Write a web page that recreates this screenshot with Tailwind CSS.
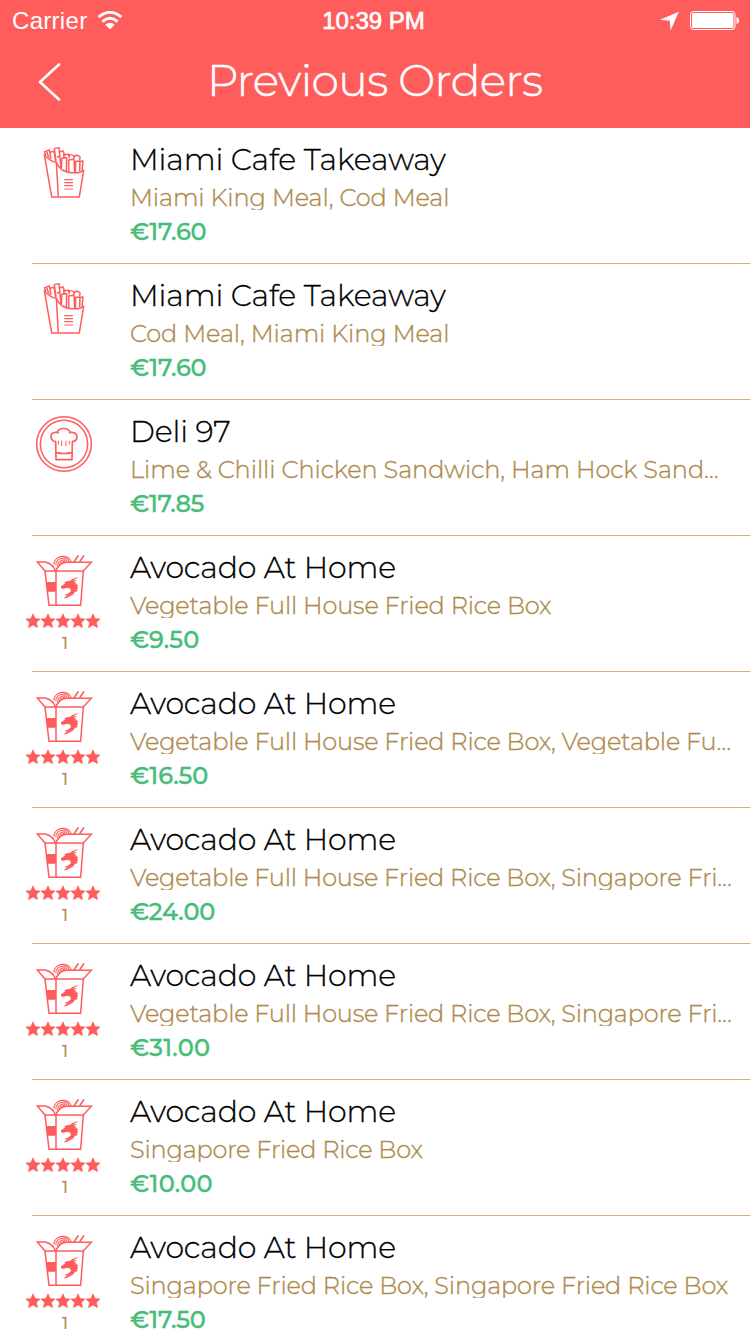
<!DOCTYPE html>
<html lang="en">
<head>
<meta charset="utf-8">
<title>Previous Orders</title>
<script src="https://cdn.jsdelivr.net/npm/@tailwindcss/browser@4"></script>
</head>
<body class="w-[750px] h-[1334px] overflow-hidden bg-white font-['Montserrat','Inter',sans-serif]">
<svg class="hidden">
  <symbol id="fries" viewBox="0 0 110 94">
    <g transform="translate(34 12.3) scale(.33333)" fill="none" stroke="#ff5c5c" stroke-width="4.5" stroke-linejoin="round">
      <path d="M31 43L53 170H136L149 90Q139 98 119 97Q80 99 67 66Q48 64 31 43Z"/>
      <path d="M67 66L73 170"/>
      <path d="M35 44L32 34L46 29L51 56M39 35L44 52M50 56L48 36L60 33L65 64M66 63L61 25L75 22L81 85M75 35L88 32L92 49M69 50L80 48M82 84L84 53L98 52L97 92M90 51L89 43L104 42L106 54M104 95L104 59L120 57L122 96M105 49L107 43L120 46L120 57M124 96L125 63L138 62L137 93M120 51L127 44L138 49L137 61M138 64L147 62L144 91"/>
      <path d="M91 118H117M91 127H117M91 136H117M91 146H117" stroke-width="3.5"/>
    </g>
  </symbol>
  <symbol id="chef" viewBox="0 0 110 94">
    <g transform="translate(30 10) scale(.33333)" fill="none" stroke="#ff5c5c" stroke-width="4.5" stroke-linejoin="round">
      <circle cx="102" cy="102" r="82"/><circle cx="102" cy="102" r="71"/>
      <path d="M78 147L77 95C59 92 58 68 76 67Q82 66 86 70M81 68C85 52 116 51 121 68M117 70Q121 66 127 67C146 69 145 92 127 95L126 149H78V147M78 128Q102 133 126 128" stroke-width="5"/>
      <path d="M85 92V104M95 92V108M108 92V108M118 92V104" stroke-width="3"/>
    </g>
  </symbol>
  <symbol id="noodles" viewBox="0 0 110 94">
    <g transform="translate(20 9) scale(.33333)" fill="none" stroke="#ff5c5c" stroke-width="4.5">
      <path d="M75 78H190L182 181H87ZM108 78V181"/>
      <path d="M75 78L52 51H76Q98 56 107 78Q118 54 140 52H214L190 78"/>
      <path d="M78 111H108V140H82Z" fill="#ff5c5c" stroke="none"/>
      <path d="M101 58C104 28 148 26 154 52M107 60C110 36 142 33 148 52M112 64C115 43 137 40 142 52M118 61C121 49 133 47 136 53" stroke-width="3.5"/>
      <path d="M162 51L175 31M179 51L192 31" stroke-width="5"/>
      <path d="M113 93L136 92" stroke-width="1" opacity=".4"/>
      <path fill="#ff5c5c" stroke="none" d="M123 123L130 119L137 114L130 113L141 109L149 108Q155 101 176 96Q168 103 158 106L171 106L163 110Q169 113 170 119L174 118L172 126L175 128L171 133L173 137L164 142L159 149L150 154L138 160L131 158L143 152L132 151L142 147L151 140Q155 134 148 130L139 128L132 131L124 131Z"/>
    </g>
  </symbol>
  <symbol id="stars" viewBox="0 0 76 16">
    <g fill="#ff5c5c" stroke="#ff5c5c" stroke-width=".5">
      <path id="s" d="M8 .8L10.2 5.4L15.2 6L11.5 9.6L12.6 14.7L8 12.1L3.4 14.7L4.5 9.6L.8 6L5.8 5.4Z"/>
      <use href="#s" x="15"/><use href="#s" x="30"/><use href="#s" x="45"/><use href="#s" x="60"/>
    </g>
  </symbol>
</svg>

<header class="h-[128px] bg-[#ff5c5c] text-white">
  <div class="h-[41px] grid grid-cols-[1fr_auto_1fr] items-center font-['Liberation_Sans',Arial,sans-serif] text-[24px] leading-[41px]">
    <div class="flex items-center pl-[12px]">
      <span class="tracking-[0.3px]">Carrier</span>
      <svg class="ml-[10px] w-[26px] h-[20px]" viewBox="98 11 26 20" fill="none" stroke="white" stroke-width="3">
        <path d="M99.6 17.2Q111 7.4 122.4 17.2M103.4 21.6Q111 15 118.6 21.6"/>
        <path d="M106.2 24.8Q111 20.6 115.8 24.8L111 29.2Z" fill="white" stroke="none"/>
      </svg>
    </div>
    <div class="-ml-[3px] [-webkit-text-stroke:0.7px_white]">10:39 PM</div>
    <svg class="justify-self-end w-[92px] h-[41px]" viewBox="658 0 92 41">
      <path d="M660 19.8L678.8 11.7L670.6 30.5L669.8 20.7Z" fill="white"/>
      <rect x="690.5" y="11.5" width="44.5" height="18" rx="3" fill="none" stroke="white"/>
      <rect x="692" y="13" width="41.5" height="15" rx="1.5" fill="white"/>
      <path d="M736.5 17Q739 17.5 739 20.5T736.5 24Z" fill="white"/>
    </svg>
  </div>
  <div class="h-[78px] flex items-center">
    <svg class="w-[208px] h-[78px]" viewBox="0 41 208 78" fill="none" stroke="white" stroke-width="2.6" stroke-linecap="round" stroke-linejoin="round"><path d="M59 64.5L40 82L59 99.5"/></svg>
    <h1 class="text-[44px] font-light tracking-[-0.6px] leading-[78px] whitespace-nowrap -ml-[1px] [-webkit-text-stroke:0.5px_white]">Previous Orders</h1>
  </div>
</header>
<main id="orders"></main>

<template id="row">
  <article class="relative h-[136px] flex whitespace-nowrap">
    <div class="w-[130px] shrink-0 flex flex-col">
      <svg class="w-[110px] h-[94px]"><use class="icon"/></svg>
      <div class="rating -mt-[17px] hidden">
        <svg class="ml-[25px] w-[76px] h-[16px]"><use href="#stars"/></svg>
        <p class="w-[130px] text-center text-[16px] leading-[30px] font-medium text-[#ae8a4e]">1</p>
      </div>
    </div>
    <div class="flex-1 pt-[12px]">
      <h2 class="text-[30px] leading-[39px] font-light text-black [-webkit-text-stroke:0.3px_black]"></h2>
      <p class="items h-[31px] mb-[5px] overflow-hidden text-[24px] leading-[38px] font-light text-[#ae8a4e] [-webkit-text-stroke:0.35px_#ae8a4e]"></p>
      <p class="price text-[24px] leading-[34px] font-medium text-[#45bd78] [-webkit-text-stroke:0.35px_#45bd78]"></p>
    </div>
    <div class="absolute left-[32px] right-0 bottom-0 h-px bg-[#d6b07a]"></div>
  </article>
</template>
<script>
const V='Vegetable Full House Fried Rice Box', S='Singapore Fried Rice Box', A='Avocado At Home', M='Miami Cafe Takeaway';
// icon, name, items, price, letter-spacing of name, items and price
[
 ['fries',M,'Miami King Meal, Cod Meal','€17.60',-.12,-.1,-.15],
 ['fries',M,'Cod Meal, Miami King Meal','€17.60',-.12,-.1,-.15],
 ['chef','Deli 97','Lime & Chilli Chicken Sandwich, Ham Hock Sand…','€17.85',-.1,-.07,-.4],
 ['noodles',A,V,'€9.50',-.17,-.17,.15],
 ['noodles',A,V+', Vegetable Fu…','€16.50',-.17,-.18,-.05],
 ['noodles',A,V+', Singapore Fri…','€24.00',-.17,-.19,-.15],
 ['noodles',A,V+', Singapore Fri…','€31.00',-.17,-.19,.2],
 ['noodles',A,S,'€10.00',-.17,-.19,.25],
 ['noodles',A,S+', '+S,'€17.50',-.17,-.15,-.15],
].forEach(([icon,name,items,price,a,b,c])=>{
  const n=document.getElementById('row').content.cloneNode(true);
  n.querySelector('.icon').setAttribute('href','#'+icon);
  if(icon==='noodles') n.querySelector('.rating').classList.remove('hidden');
  [['h2',name,a],['.items',items,b],['.price',price,c]].forEach(([q,t,s])=>{
    const e=n.querySelector(q); e.textContent=t; e.style.letterSpacing=s+'px';
  });
  document.getElementById('orders').append(n);
});
</script>
</body>
</html>
